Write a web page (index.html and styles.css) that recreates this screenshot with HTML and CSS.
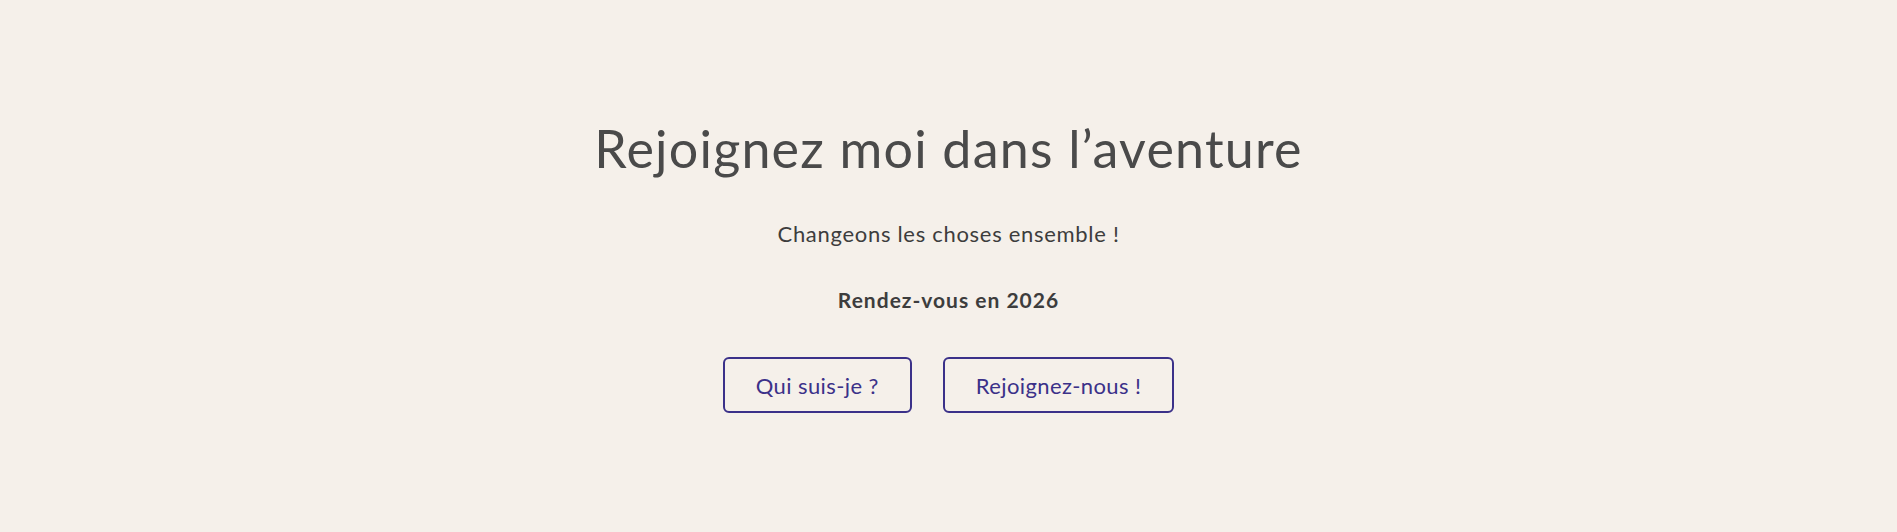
FILE: index.html
```html
<!DOCTYPE html>
<html lang="fr">
<head>
<meta charset="utf-8">
<title>Rejoignez moi dans l’aventure</title>
<link rel="stylesheet" href="styles.css">
</head>
<body>
<main class="hero">
  <h1 class="hero-title">Rejoignez moi dans l’aventure</h1>
  <p class="hero-sub">Changeons les choses ensemble !</p>
  <p class="hero-date">Rendez-vous en 2026</p>
  <div class="hero-actions">
    <a class="btn" href="#">Qui suis-je ?</a>
    <a class="btn" href="#">Rejoignez-nous !</a>
  </div>
</main>
</body>
</html>
```
FILE: styles.css
```css
html, body {
  margin: 0;
  padding: 0;
  background: #f5f0ea;
}
body {
  font-family: Lato, "Noto Sans", sans-serif;
  color: #3d3d3d;
}
.hero {
  height: 532px;
  box-sizing: border-box;
  padding-top: 117px;
  display: flex;
  flex-direction: column;
  align-items: center;
  text-align: center;
}
.hero-title {
  margin: 0;
  font-size: 52px;
  line-height: 62px;
  font-weight: 400;
  letter-spacing: 1.2px;
  color: #4a4a4a;
}
.hero-sub {
  margin: 41px 0 0;
  font-size: 22px;
  line-height: 28px;
  letter-spacing: 0.7px;
  color: #3d3d3d;
}
.hero-date {
  margin: 38px 0 0;
  font-size: 21px;
  line-height: 28px;
  font-weight: 700;
  letter-spacing: 1px;
  color: #3d3d3d;
}
.hero-actions {
  margin-top: 43px;
  display: flex;
  gap: 31px;
}
.btn {
  display: flex;
  align-items: center;
  justify-content: center;
  box-sizing: border-box;
  height: 56px;
  padding: 0 31px;
  border: 2px solid #3b3189;
  border-radius: 6px;
  color: #3b3189;
  font-size: 22px;
  letter-spacing: 0.4px;
  text-decoration: none;
}
```
